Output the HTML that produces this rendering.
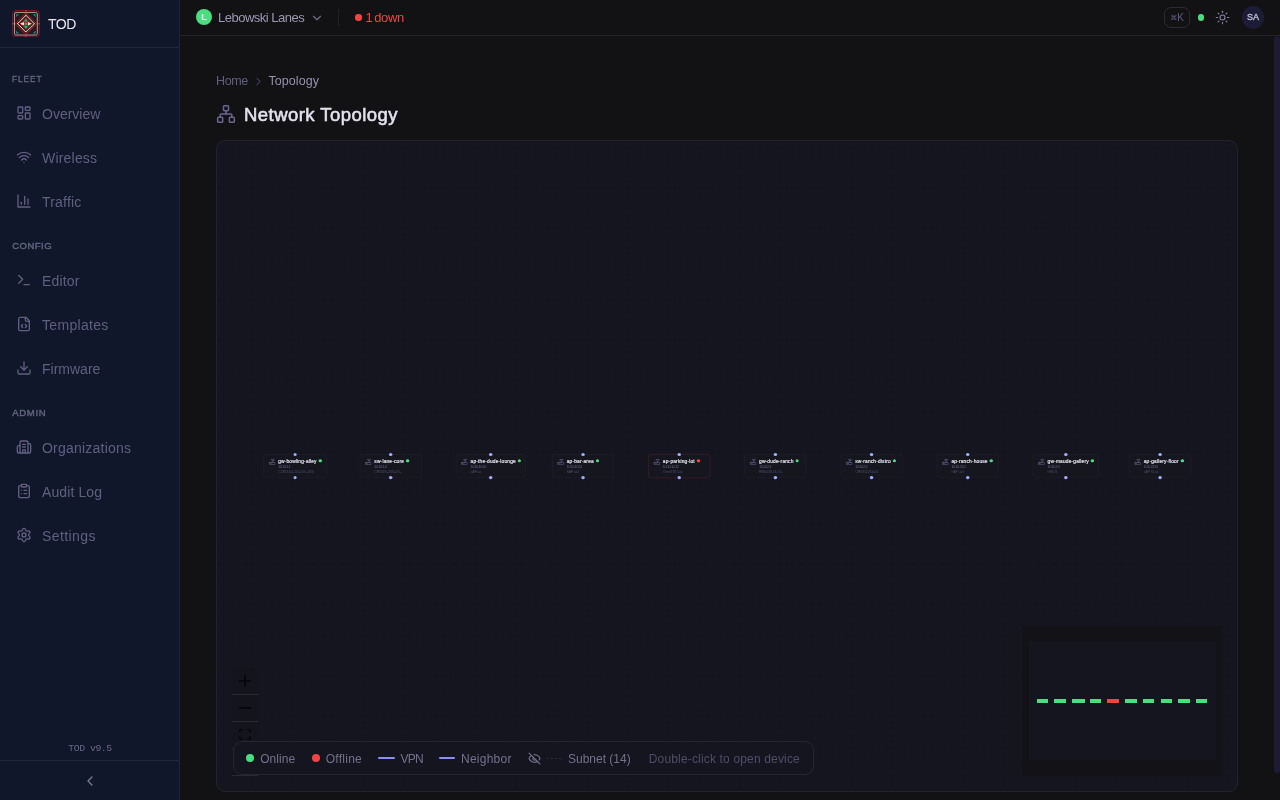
<!DOCTYPE html>
<html lang="en">
<head>
<meta charset="utf-8">
<title>TOD – Network Topology</title>
<style>
*{box-sizing:border-box;margin:0;padding:0}
html,body{width:1280px;height:800px;overflow:hidden;background:#121214;font-family:"Liberation Sans",sans-serif;color:#e4e2ee}
svg{display:block}
.ico{fill:none;stroke:currentColor;stroke-width:2;stroke-linecap:round;stroke-linejoin:round}
/* sidebar */
#side,#top,#bc,#ttl,#card{will-change:transform}
#side{position:absolute;left:0;top:0;width:180px;height:800px;background:#11172a;border-right:1px solid #1b2337}
#brand{position:absolute;left:0;top:0;width:179px;height:48px;border-bottom:1px solid #1f2438}
#logo{position:absolute;left:12.2px;top:9.7px;width:27.8px;height:27.5px}
#brand .t{position:absolute;left:48px;top:14px;font-size:14px;line-height:20px;color:#e8e6f2;letter-spacing:-.5px}
.sec{position:absolute;left:12.2px;font-size:9.5px;line-height:12px;font-weight:400;-webkit-text-stroke:.42px #64627f;letter-spacing:0;color:#64627f;transform:scaleX(.85);transform-origin:0 50%}
.nav{position:absolute;left:0;width:179px;height:32px;color:#615f80}
.nav svg{position:absolute;left:16px;top:8px;width:16px;height:16px}
.nav span{position:absolute;left:42px;top:7px;font-size:14px;line-height:20px;white-space:nowrap}
#ver{position:absolute;left:0;width:180px;top:742.8px;text-align:center;font-family:"Liberation Mono","DejaVu Sans Mono",monospace;font-size:9.8px;line-height:12px;color:#696789;letter-spacing:-.45px}
#collapse{position:absolute;left:0;top:760px;width:179px;height:40px;border-top:1px solid #1f2438;color:#7a7898}
#collapse svg{position:absolute;left:82px;top:12px;width:16px;height:16px}
/* top bar */
#top{position:absolute;left:180px;top:0;width:1100px;height:36px;border-bottom:1px solid #232327;background:#121214}
#org{position:absolute;left:16px;top:9px;width:16px;height:16px;border-radius:50%;background:#4ade80;color:#fff;font-size:9px;font-weight:700;line-height:16.5px;text-align:center}
#orgn{position:absolute;left:38px;top:9px;font-size:13px;line-height:18px;color:#9a98b1;white-space:nowrap;letter-spacing:-.5px}
#orgc{position:absolute;left:129.5px;top:10.6px;width:14px;height:14px;color:#6f6d8c}
#div{position:absolute;left:158px;top:9px;width:1px;height:17px;background:#202026}
#dn{position:absolute;left:175.3px;top:14.25px;width:6.4px;height:6.4px;border-radius:50%;background:#ef4444}
#dnt{position:absolute;left:185.5px;top:9px;font-size:13px;line-height:18px;color:#ef4444;white-space:nowrap;letter-spacing:-.42px;word-spacing:-1.2px}
#kbd{position:absolute;left:984px;top:7px;width:26px;height:21px;border:1px solid #2a2a31;border-radius:7px;font-family:"Liberation Sans","DejaVu Sans",sans-serif;font-size:10px;line-height:19px;text-align:center;color:#5f5d80;white-space:nowrap}
#kbd span{font-size:7px;position:relative;top:-1px}
#live{position:absolute;left:1018px;top:14.4px;width:6.2px;height:6.2px;border-radius:50%;background:#4ade80}
#sun{position:absolute;left:1035.3px;top:9.9px;width:15px;height:15px;color:#85839f;stroke-width:1.8}
#me{position:absolute;left:1061.8px;top:6.2px;width:22.4px;height:22.4px;border-radius:50%;background:#1c1c36;color:#c4c2da;font-size:9px;font-weight:400;-webkit-text-stroke:.3px #c4c2da;line-height:22.4px;text-align:center;letter-spacing:0}
#sb{position:absolute;left:1274px;top:36px;width:6px;height:737px;border-radius:3px;background:#1b1b33}
/* content */
#bc{position:absolute;left:216px;top:72px;height:18px;font-size:12.5px;line-height:18px;white-space:nowrap}
#bc .h{position:absolute;left:0;top:0;color:#615f80;letter-spacing:-.4px}
#bc svg{position:absolute;left:36px;top:2.5px;width:13px;height:13px;color:#5f5d82;stroke-width:1.7}
#bc .c{position:absolute;left:52.5px;top:0;color:#9391aa;letter-spacing:.05px}
#ttl{position:absolute;left:216px;top:104px;height:20px}
#ttl svg{position:absolute;left:0;top:0;width:20px;height:20px;color:#6a6690;stroke-width:1.8}
#ttl span{position:absolute;left:28px;top:-1px;font-size:18.5px;line-height:24px;font-weight:400;-webkit-text-stroke:.55px #e4e2ee;letter-spacing:.46px;color:#e4e2ee;white-space:nowrap}
#card{position:absolute;left:216px;top:140px;width:1022px;height:652px;border:1px solid #23232f;border-radius:9px;background:#15151f;overflow:hidden}

#dots{position:absolute;left:0;top:0;width:1020px;height:650px;background-image:radial-gradient(circle,#1a1a25 .5px,transparent .85px);background-size:6.6px 6.6px;background-position:2.2px 1px}
/* flow */
#flow{position:absolute;left:0;top:0;width:2662px;height:1693px;transform-origin:0 0;transform:scale(.3847)}
.node{position:absolute;top:814px;height:61.5px;min-width:161px;padding:0 11px 0 12px;border:1.2px solid #2a2a37;border-radius:8px;background:#16161f;display:flex;white-space:nowrap}
.node.off{border-color:#6e2630}
.ni{width:18px;height:18px;margin-top:9.5px;margin-right:7px;color:#66648a;flex:none;stroke-width:2.3}
.nb{flex:1}
.nm{display:flex;align-items:center;height:18px;margin-top:9px;font-size:12.6px;font-weight:400;-webkit-text-stroke:.45px #e2e0ee;letter-spacing:.44px;color:#e2e0ee}
.st{display:block;width:8.5px;height:8.5px;border-radius:50%;background:#4ade80;margin-left:5px;margin-top:-4px}
.off .st{background:#ef4444}
.ip{font-size:10px;line-height:9px;margin-top:1px;color:#66648a;letter-spacing:-1.15px}
.md{font-size:10px;line-height:17px;color:#4b4966;letter-spacing:-.8px}
.hd{position:absolute;left:50%;width:8.5px;height:8.5px;margin-left:-4.25px;border-radius:50%;background:#a3a9fb}
.hd.t{top:-4.5px}.hd.b{bottom:-4.5px}
/* minimap */
#mini{position:absolute;left:805px;top:485px;width:200px;height:150px;background:#121217}
#mview{position:absolute;left:6.5px;top:15.4px;width:187.2px;height:119px;background:#15151f}
#mini i{position:absolute;top:72.6px;height:4.5px}
/* controls */
#ctl{position:absolute;left:15px;top:526.6px;width:26px}
.cb{height:27px;border-bottom:1px solid #292934;background:#14141d;display:flex;align-items:center;justify-content:center}
.cb svg{fill:#050508}
/* legend */
#leg{position:absolute;left:16px;top:600px;width:581px;height:34px;border:1px solid #262632;border-radius:9px;background:#15151f;font-size:12px;line-height:18px;color:#72708e;white-space:nowrap}
#leg span{position:absolute;top:7.5px}
#leg .hint{color:#4e4c68}
#leg .dot{position:absolute;top:12.3px;width:8.2px;height:8.2px;border-radius:50%}
#leg .ln{position:absolute;top:15px;width:16.5px;height:2px;background:#8b8ff5;border-radius:1px}
#leg .dl{position:absolute;top:16px;width:16px;height:0;border-top:1px dashed #252533}
#leg svg{position:absolute;top:10px;width:13px;height:13px;color:#76748f}
</style>
</head>
<body>
<div id="side">
  <div id="brand">
    <svg id="logo" viewBox="0 0 28 28" preserveAspectRatio="none">
      <rect x=".5" y=".5" width="27" height="27" rx="3.5" fill="#2a1724" stroke="#7c191d"/>
      <rect x="2.5" y="2.5" width="23" height="23" rx="1.6" fill="none" stroke="#a9a194"/>
      <path d="M14 0v4M14 24v4M0 14h4M24 14h4" stroke="#c9b8a4" stroke-opacity=".4" stroke-width="1"/>
      <path d="M4.2 4.2h2.9L4.2 7.1zM23.8 4.2h-2.9L23.8 7.1zM4.2 23.8h2.9L4.2 20.9zM23.8 23.8h-2.9L23.8 20.9z" fill="#23867f"/>
      <path d="M14 3.4 24.6 14 14 24.6 3.4 14z" fill="#1a0f18" stroke="#b3231c" stroke-width="1.4" stroke-dasharray=".9 .5142"/>
      <path d="M14 5.6 22.4 14 14 22.4 5.6 14z" fill="none" stroke="#eadfc8" stroke-width="1.15" stroke-dasharray="1 .4142"/>
      <path d="M14 7.5 20.5 14 14 20.5 7.5 14z" fill="#8e1f1b"/>
      <path d="M8.1 14l4-1.9v3.8zM19.9 14l-4-1.9v3.8z" fill="#f6ecd6"/>
      <path d="M14 8.7l1.9 2.9h-3.8zM14 19.3l1.9-2.9h-3.8z" fill="#2aa79c"/>
      <rect x="12.55" y="12.55" width="2.9" height="2.9" fill="#2aa79c" stroke="#b0251d" stroke-width=".7"/>
    </svg>
    <div class="t">TOD</div>
  </div>
  <div class="sec" style="top:73.1px;letter-spacing:1.27px">FLEET</div>
  <div class="nav" style="top:97px"><svg class="ico" viewBox="0 0 24 24"><rect width="7" height="9" x="3" y="3" rx="1"/><rect width="7" height="5" x="14" y="3" rx="1"/><rect width="7" height="9" x="14" y="12" rx="1"/><rect width="7" height="5" x="3" y="16" rx="1"/></svg><span>Overview</span></div>
  <div class="nav" style="top:141px"><svg class="ico" viewBox="0 0 24 24"><path d="M12 20h.01"/><path d="M2 8.82a15 15 0 0 1 20 0"/><path d="M5 12.859a10 10 0 0 1 14 0"/><path d="M8.5 16.429a5 5 0 0 1 7 0"/></svg><span style="letter-spacing:0.2px">Wireless</span></div>
  <div class="nav" style="top:185px"><svg class="ico" viewBox="0 0 24 24"><path d="M3 3v18h18"/><path d="M18 17V9"/><path d="M13 17V5"/><path d="M8 17v-3"/></svg><span style="letter-spacing:0.2px">Traffic</span></div>
  <div class="sec" style="top:240px;letter-spacing:.5px;transform:none">CONFIG</div>
  <div class="nav" style="top:264px"><svg class="ico" viewBox="0 0 24 24"><polyline points="4 17 10 11 4 5"/><line x1="12" x2="20" y1="19" y2="19"/></svg><span style="letter-spacing:0.15px">Editor</span></div>
  <div class="nav" style="top:308px"><svg class="ico" viewBox="0 0 24 24"><path d="M10 12.5 8 15l2 2.5"/><path d="m14 12.5 2 2.5-2 2.5"/><path d="M14 2v4a2 2 0 0 0 2 2h4"/><path d="M15 2H6a2 2 0 0 0-2 2v16a2 2 0 0 0 2 2h12a2 2 0 0 0 2-2V7z"/></svg><span style="letter-spacing:0.32px">Templates</span></div>
  <div class="nav" style="top:352px"><svg class="ico" viewBox="0 0 24 24"><path d="M21 15v4a2 2 0 0 1-2 2H5a2 2 0 0 1-2-2v-4"/><polyline points="7 10 12 15 17 10"/><line x1="12" x2="12" y1="15" y2="3"/></svg><span>Firmware</span></div>
  <div class="sec" style="top:407.2px;letter-spacing:.72px;transform:none">ADMIN</div>
  <div class="nav" style="top:431px"><svg class="ico" viewBox="0 0 24 24"><path d="M10 12h4"/><path d="M10 8h4"/><path d="M14 21v-3a2 2 0 0 0-4 0v3"/><path d="M6 10H4a2 2 0 0 0-2 2v7a2 2 0 0 0 2 2h16a2 2 0 0 0 2-2V9a2 2 0 0 0-2-2h-2"/><path d="M6 21V5a2 2 0 0 1 2-2h8a2 2 0 0 1 2 2v16"/></svg><span style="letter-spacing:0.22px">Organizations</span></div>
  <div class="nav" style="top:475px"><svg class="ico" viewBox="0 0 24 24"><rect width="8" height="4" x="8" y="2" rx="1" ry="1"/><path d="M16 4h2a2 2 0 0 1 2 2v14a2 2 0 0 1-2 2H6a2 2 0 0 1-2-2V6a2 2 0 0 1 2-2h2"/><path d="M12 11h4"/><path d="M12 16h4"/><path d="M8 11h.01"/><path d="M8 16h.01"/></svg><span style="letter-spacing:0.1px">Audit Log</span></div>
  <div class="nav" style="top:519px"><svg class="ico" viewBox="0 0 24 24"><path d="M9.671 4.136a2.34 2.34 0 0 1 4.659 0 2.34 2.34 0 0 0 3.319 1.915 2.34 2.34 0 0 1 2.33 4.033 2.34 2.34 0 0 0 0 3.831 2.34 2.34 0 0 1-2.33 4.033 2.34 2.34 0 0 0-3.319 1.915 2.34 2.34 0 0 1-4.659 0 2.34 2.34 0 0 0-3.32-1.915 2.34 2.34 0 0 1-2.33-4.033 2.34 2.34 0 0 0 0-3.831A2.34 2.34 0 0 1 6.35 6.051a2.34 2.34 0 0 0 3.319-1.915"/><circle cx="12" cy="12" r="3"/></svg><span style="letter-spacing:0.4px">Settings</span></div>
  <div id="ver">TOD v9.5</div>
  <div id="collapse"><svg class="ico" viewBox="0 0 24 24"><path d="m15 18-6-6 6-6"/></svg></div>
</div>

<div id="top">
  <div id="org">L</div>
  <div id="orgn">Lebowski Lanes</div>
  <svg id="orgc" class="ico" viewBox="0 0 24 24"><path d="m6 9 6 6 6-6"/></svg>
  <div id="div"></div>
  <div id="dn"></div>
  <div id="dnt">1 down</div>
  <div id="kbd"><span>⌘</span>K</div>
  <div id="live"></div>
  <svg id="sun" class="ico" viewBox="0 0 24 24"><circle cx="12" cy="12" r="4"/><path d="M12 2v2"/><path d="M12 20v2"/><path d="m4.93 4.93 1.41 1.41"/><path d="m17.66 17.66 1.41 1.41"/><path d="M2 12h2"/><path d="M20 12h2"/><path d="m6.34 17.66-1.41 1.41"/><path d="m19.07 4.93-1.41 1.41"/></svg>
  <div id="me">SA</div>
</div>
<div id="sb"></div>

<div id="bc"><span class="h">Home</span><svg class="ico" viewBox="0 0 24 24"><path d="m9 18 6-6-6-6"/></svg><span class="c">Topology</span></div>
<div id="ttl"><svg class="ico" viewBox="0 0 24 24"><rect x="16" y="16" width="6" height="6" rx="1"/><rect x="2" y="16" width="6" height="6" rx="1"/><rect x="9" y="2" width="6" height="6" rx="1"/><path d="M5 16v-3a1 1 0 0 1 1-1h12a1 1 0 0 1 1 1v3"/><path d="M12 12V8"/></svg><span>Network Topology</span></div>

<div id="card">
<div id="dots"></div>
<div id="flow">
<div class="node" style="left:121px"><i class="hd t"></i><svg class="ico ni" viewBox="0 0 24 24"><rect width="20" height="8" x="2" y="14" rx="2"/><path d="M6.01 18H6"/><path d="M10.01 18H10"/><path d="M15 10v4"/><path d="M17.84 7.17a4 4 0 0 0-5.66 0"/><path d="M20.66 4.34a8 8 0 0 0-11.31 0"/></svg><div class="nb"><div class="nm"><span>gw-bowling-alley</span><i class="st"></i></div><div class="ip">10.10.1.1</div><div class="md">CCR2004-1G-12S+2XS</div></div><i class="hd b"></i></div>
<div class="node" style="left:371px"><i class="hd t"></i><svg class="ico ni" viewBox="0 0 24 24"><rect width="20" height="8" x="2" y="14" rx="2"/><path d="M6.01 18H6"/><path d="M10.01 18H10"/><path d="M15 10v4"/><path d="M17.84 7.17a4 4 0 0 0-5.66 0"/><path d="M20.66 4.34a8 8 0 0 0-11.31 0"/></svg><div class="nb"><div class="nm"><span>sw-lane-core</span><i class="st"></i></div><div class="ip">10.10.1.2</div><div class="md">CRS326-24G-2S+</div></div><i class="hd b"></i></div>
<div class="node" style="left:621px"><i class="hd t"></i><svg class="ico ni" viewBox="0 0 24 24"><rect width="20" height="8" x="2" y="14" rx="2"/><path d="M6.01 18H6"/><path d="M10.01 18H10"/><path d="M15 10v4"/><path d="M17.84 7.17a4 4 0 0 0-5.66 0"/><path d="M20.66 4.34a8 8 0 0 0-11.31 0"/></svg><div class="nb"><div class="nm"><span>ap-the-dude-lounge</span><i class="st"></i></div><div class="ip">10.10.10.10</div><div class="md">cAP ax</div></div><i class="hd b"></i></div>
<div class="node" style="left:871px"><i class="hd t"></i><svg class="ico ni" viewBox="0 0 24 24"><rect width="20" height="8" x="2" y="14" rx="2"/><path d="M6.01 18H6"/><path d="M10.01 18H10"/><path d="M15 10v4"/><path d="M17.84 7.17a4 4 0 0 0-5.66 0"/><path d="M20.66 4.34a8 8 0 0 0-11.31 0"/></svg><div class="nb"><div class="nm"><span>ap-bar-area</span><i class="st"></i></div><div class="ip">10.10.10.11</div><div class="md">hAP ax2</div></div><i class="hd b"></i></div>
<div class="node off" style="left:1121px"><i class="hd t"></i><svg class="ico ni" viewBox="0 0 24 24"><rect width="20" height="8" x="2" y="14" rx="2"/><path d="M6.01 18H6"/><path d="M10.01 18H10"/><path d="M15 10v4"/><path d="M17.84 7.17a4 4 0 0 0-5.66 0"/><path d="M20.66 4.34a8 8 0 0 0-11.31 0"/></svg><div class="nb"><div class="nm"><span>ap-parking-lot</span><i class="st"></i></div><div class="ip">10.10.10.12</div><div class="md">OmniTIK 5 ac</div></div><i class="hd b"></i></div>
<div class="node" style="left:1371px"><i class="hd t"></i><svg class="ico ni" viewBox="0 0 24 24"><rect width="20" height="8" x="2" y="14" rx="2"/><path d="M6.01 18H6"/><path d="M10.01 18H10"/><path d="M15 10v4"/><path d="M17.84 7.17a4 4 0 0 0-5.66 0"/><path d="M20.66 4.34a8 8 0 0 0-11.31 0"/></svg><div class="nb"><div class="nm"><span>gw-dude-ranch</span><i class="st"></i></div><div class="ip">10.10.2.1</div><div class="md">RB5009UG+S+</div></div><i class="hd b"></i></div>
<div class="node" style="left:1621px"><i class="hd t"></i><svg class="ico ni" viewBox="0 0 24 24"><rect width="20" height="8" x="2" y="14" rx="2"/><path d="M6.01 18H6"/><path d="M10.01 18H10"/><path d="M15 10v4"/><path d="M17.84 7.17a4 4 0 0 0-5.66 0"/><path d="M20.66 4.34a8 8 0 0 0-11.31 0"/></svg><div class="nb"><div class="nm"><span>sw-ranch-distro</span><i class="st"></i></div><div class="ip">10.10.2.2</div><div class="md">CRS112-8G-4S</div></div><i class="hd b"></i></div>
<div class="node" style="left:1871px"><i class="hd t"></i><svg class="ico ni" viewBox="0 0 24 24"><rect width="20" height="8" x="2" y="14" rx="2"/><path d="M6.01 18H6"/><path d="M10.01 18H10"/><path d="M15 10v4"/><path d="M17.84 7.17a4 4 0 0 0-5.66 0"/><path d="M20.66 4.34a8 8 0 0 0-11.31 0"/></svg><div class="nb"><div class="nm"><span>ap-ranch-house</span><i class="st"></i></div><div class="ip">10.10.2.10</div><div class="md">hAP ax3</div></div><i class="hd b"></i></div>
<div class="node" style="left:2121px"><i class="hd t"></i><svg class="ico ni" viewBox="0 0 24 24"><rect width="20" height="8" x="2" y="14" rx="2"/><path d="M6.01 18H6"/><path d="M10.01 18H10"/><path d="M15 10v4"/><path d="M17.84 7.17a4 4 0 0 0-5.66 0"/><path d="M20.66 4.34a8 8 0 0 0-11.31 0"/></svg><div class="nb"><div class="nm"><span>gw-maude-gallery</span><i class="st"></i></div><div class="ip">10.10.3.1</div><div class="md">hEX S</div></div><i class="hd b"></i></div>
<div class="node" style="left:2371px"><i class="hd t"></i><svg class="ico ni" viewBox="0 0 24 24"><rect width="20" height="8" x="2" y="14" rx="2"/><path d="M6.01 18H6"/><path d="M10.01 18H10"/><path d="M15 10v4"/><path d="M17.84 7.17a4 4 0 0 0-5.66 0"/><path d="M20.66 4.34a8 8 0 0 0-11.31 0"/></svg><div class="nb"><div class="nm"><span>ap-gallery-floor</span><i class="st"></i></div><div class="ip">10.10.3.10</div><div class="md">cAP XL ac</div></div><i class="hd b"></i></div>
</div>
<div id="mini"><div id="mview"></div>
<i style="left:14.8px;width:11.4px;background:#4ade80"></i>
<i style="left:32.2px;width:11.8px;background:#4ade80"></i>
<i style="left:50.0px;width:13.0px;background:#4ade80"></i>
<i style="left:67.8px;width:11.6px;background:#4ade80"></i>
<i style="left:85.1px;width:12.1px;background:#ef4444"></i>
<i style="left:103.2px;width:11.8px;background:#4ade80"></i>
<i style="left:121.0px;width:11.4px;background:#4ade80"></i>
<i style="left:139.0px;width:11.2px;background:#4ade80"></i>
<i style="left:156.1px;width:11.9px;background:#4ade80"></i>
<i style="left:174.0px;width:11.4px;background:#4ade80"></i>
</div>
<div id="ctl">
  <div class="cb"><svg viewBox="0 0 32 32" style="width:12px;height:12px"><path d="M32 18.133H18.133V32h-4.266V18.133H0v-4.266h13.867V0h4.266v13.867H32z"/></svg></div>
  <div class="cb"><svg viewBox="0 0 32 5" style="width:12px;height:2px"><path d="M0 0h32v4.2H0z"/></svg></div>
  <div class="cb"><svg viewBox="0 0 32 30" style="width:12px;height:11px"><path d="M3.692 4.63c0-.53.4-.938.939-.938h5.215V0H4.708C2.13 0 0 2.054 0 4.63v5.216h3.692V4.631zM27.354 0h-5.2v3.692h5.17c.53 0 .984.4.984.939v5.215H32V4.631A4.624 4.624 0 0027.354 0zm.954 24.83c0 .532-.4.94-.939.94h-5.215v3.768h5.215c2.577 0 4.631-2.13 4.631-4.707v-5.139h-3.692v5.139zm-23.677.94c-.531 0-.939-.4-.939-.94v-5.138H0v5.139c0 2.577 2.13 4.707 4.708 4.707h5.138V25.77H4.631z"/></svg></div>
  <div class="cb"></div>
</div>
<div id="leg">
  <i class="dot" style="left:12px;background:#4ade80"></i><span style="left:26.2px;letter-spacing:.07px">Online</span>
  <i class="dot" style="left:78px;background:#ef4444"></i><span style="left:91.7px;letter-spacing:.27px">Offline</span>
  <i class="ln" style="left:144px"></i><span style="left:166.5px;letter-spacing:-.7px">VPN</span>
  <i class="ln" style="left:204.5px"></i><span style="left:227px;letter-spacing:.25px">Neighbor</span>
  <svg class="ico" viewBox="0 0 24 24" style="left:294px"><path d="M10.733 5.076a10.744 10.744 0 0 1 11.205 6.575 1 1 0 0 1 0 .696 10.747 10.747 0 0 1-1.444 2.49"/><path d="M14.084 14.158a3 3 0 0 1-4.242-4.242"/><path d="M17.479 17.499a10.75 10.75 0 0 1-15.417-5.151 1 1 0 0 1 0-.696 10.75 10.75 0 0 1 4.446-5.143"/><path d="m2 2 20 20"/></svg>
  <i class="dl" style="left:312px"></i><span style="left:334px">Subnet (14)</span>
  <span class="hint" style="left:414.75px;letter-spacing:.165px">Double-click to open device</span>
</div>
</div>
</body>
</html>
